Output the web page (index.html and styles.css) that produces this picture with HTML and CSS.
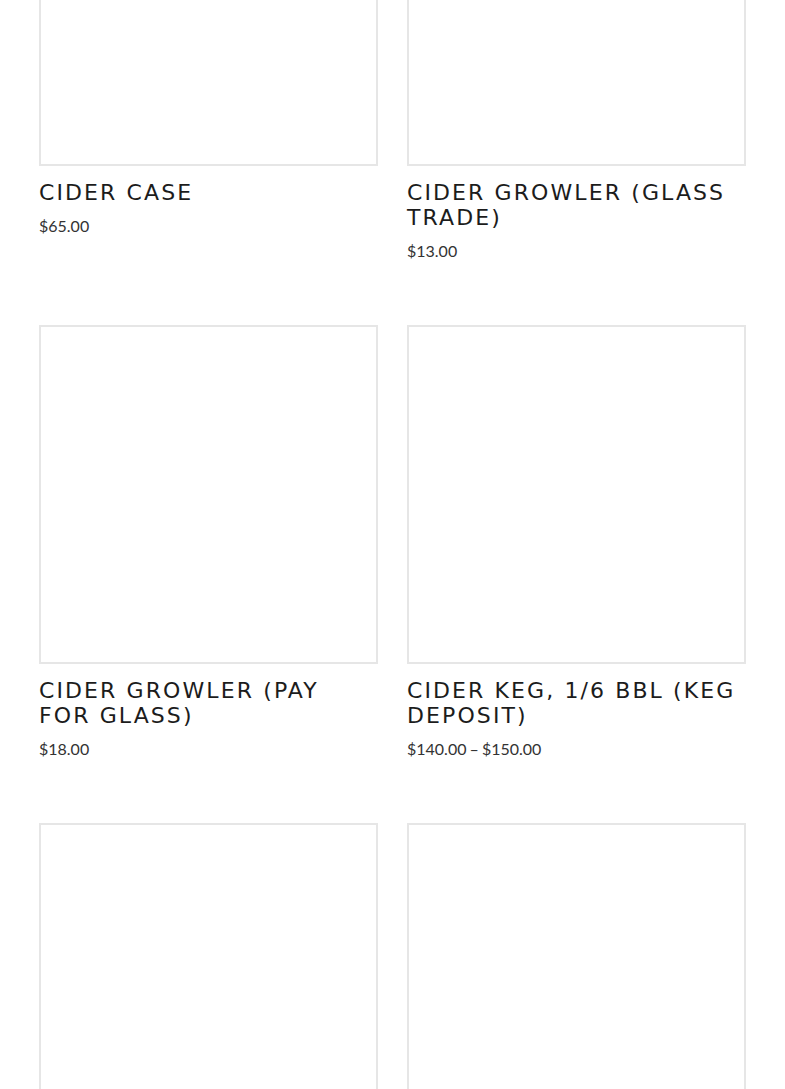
FILE: index.html
```html
<!DOCTYPE html>
<html lang="en">
<head>
  <meta charset="UTF-8" />
  <title>Cider</title>
  <link rel="stylesheet" href="styles.css">
</head>
<body>
  <ul class="products">
    <li class="product">
      <a href="#" class="thumb"></a>
      <h2 class="product-title">Cider Case</h2>
      <span class="price">$65.00</span>
    </li>
    <li class="product">
      <a href="#" class="thumb"></a>
      <h2 class="product-title">Cider Growler (Glass Trade)</h2>
      <span class="price">$13.00</span>
    </li>
    <li class="product">
      <a href="#" class="thumb"></a>
      <h2 class="product-title">Cider Growler (Pay for Glass)</h2>
      <span class="price">$18.00</span>
    </li>
    <li class="product">
      <a href="#" class="thumb"></a>
      <h2 class="product-title">Cider Keg, 1/6 BBL (Keg Deposit)</h2>
      <span class="price">$140.00 &ndash; $150.00</span>
    </li>
    <!-- next row, image only in view -->
    <li class="product">
      <a href="#" class="thumb"></a>
    </li>
    <li class="product">
      <a href="#" class="thumb"></a>
    </li>
  </ul>
</body>
</html>
```

FILE: styles.css
```css
body {
  margin: 0;
  background: #fff;
  font-family: Lato, "Liberation Sans", sans-serif;
  color: #333;
}
.products {
  list-style: none;
  margin: -173px 0 0 0;
  padding: 0 39px;
  display: grid;
  grid-template-columns: 1fr 1fr;
  column-gap: 29px;
  row-gap: 62px;
}
.product {
  display: flex;
  flex-direction: column;
  align-items: flex-start;
}
.thumb {
  display: block;
  width: 100%;
  aspect-ratio: 1;
  box-sizing: border-box;
  border: 2px solid #e6e6e6;
  background: #fff;
}
.product-title {
  margin: 14px 0 0 0;
  font-family: "DejaVu Sans", sans-serif;
  font-weight: normal;
  font-size: 22px;
  line-height: 25px;
  letter-spacing: 2.1px;
  text-transform: uppercase;
  color: #1c1c1c;
}
.price {
  margin-top: 9px;
  font-size: 16px;
  line-height: 24px;
  word-spacing: -1px;
  color: #333;
}
```
